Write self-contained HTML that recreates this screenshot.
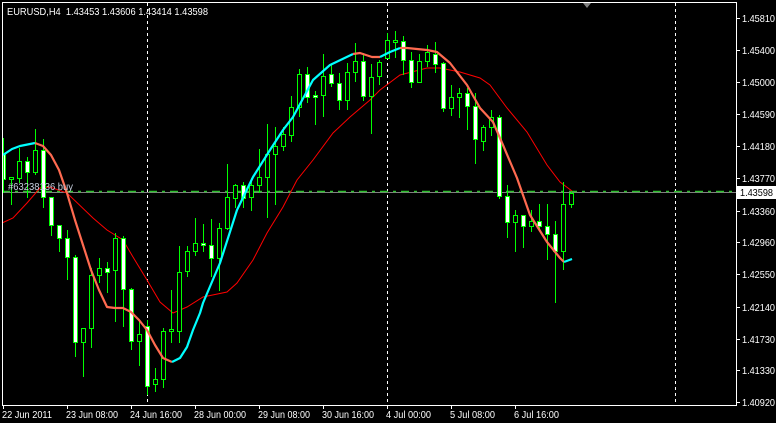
<!DOCTYPE html>
<html><head><meta charset="utf-8"><style>
html,body{margin:0;padding:0;background:#000;width:776px;height:423px;overflow:hidden}
svg{display:block}
text{font-family:"Liberation Sans",sans-serif;font-size:10.5px;fill:#fff}
</style></head><body>
<svg id="s" width="776" height="423" viewBox="0 0 776 423" xmlns="http://www.w3.org/2000/svg">
<rect width="776" height="423" fill="#000"/>
<g stroke="#fff" stroke-width="1" stroke-dasharray="3,3">
<line x1="147.5" y1="3" x2="147.5" y2="405"/>
<line x1="387.5" y1="3" x2="387.5" y2="405"/>
<line x1="675.5" y1="3" x2="675.5" y2="405"/>
</g>
<line x1="2" y1="192.5" x2="736" y2="192.5" stroke="#808080"/>
<line x1="2" y1="191.5" x2="736" y2="191.5" stroke="#2fbf2f" stroke-width="1.5" stroke-dasharray="8,5,3,5"/>
<polyline fill="none" stroke="#ff0000" stroke-width="1" points="2,223 13,218 27,203 40,188 50,187 67,193 93,218 107,230 123,240 133,257 147,280 160,302 173,313 180,310 187,307 203,297 227,292 237,283 253,260 267,233 283,207 297,180 313,160 333,133 350,117 370,100 380,90 400,75 427,68 440,68 460,72 480,78 490,85 507,108 527,132 547,165 560,182 572,191"/>
<g id="c"></g>
<g fill="none" stroke-width="2.2" stroke-linejoin="round">
<polyline stroke="#00ffff" points="3,155 12,149 20,146 35,143"/>
<polyline stroke="#ff6a50" points="35,143 43,146 51,155 59,170 67,193 75,220 83,245 91,270 99,290 107,307 115,308 123,308 131,312 139,320 147,330 155,345 163,358 172,362"/>
<polyline stroke="#00ffff" points="172,362 180,358 187,347 193,330 200,313 203,303 220,263 237,210 253,177 270,150 283,130 293,117 313,80 330,65 353,54"/>
<polyline stroke="#ff6a50" points="353,54 360,53 372,57 380,57"/>
<polyline stroke="#00ffff" points="380,57 390,52 400,48"/>
<polyline stroke="#ff6a50" points="400,48 407,48 427,50 437,52 450,63 467,85 480,108 493,122 503,145 517,178 530,215 547,242 560,258 564,262"/>
<polyline stroke="#00ffff" points="564,262 572,259"/>
</g>
<text x="8" y="190" textLength="65" lengthAdjust="spacingAndGlyphs" style="fill:#c8d0e0">#63238136 buy</text>
<rect x="2.5" y="2.5" width="734" height="403" fill="none" stroke="#fff"/>
<path d="M583 3 L591 3 L587 8 Z" fill="#808080"/>
<text x="7" y="15" textLength="201" lengthAdjust="spacingAndGlyphs" xml:space="preserve">EURUSD,H4  1.43453 1.43606 1.43414 1.43598</text>
<g id="ax"></g>
<rect x="737" y="186" width="39" height="13" fill="#fff"/>
<text x="740" y="196" textLength="33" lengthAdjust="spacingAndGlyphs" style="fill:#000">1.43598</text>
</svg>
<script>
var ns="http://www.w3.org/2000/svg";
function el(p,t,a,tx){var e=document.createElementNS(ns,t);for(var k in a)e.setAttribute(k,a[k]);if(tx)e.textContent=tx;p.appendChild(e);return e;}
var W=[[138,193],[178,205],[148,183],[157,198],[129,175],[139,208],[197,236],[225,252],[230,280],[255,357],[328,377],[268,348],[258,283],[262,293],[233,322],[236,327],[288,350],[320,366],[320,395],[368,392],[328,388],[290,343],[246,343],[246,277],[218,256],[224,252],[219,277],[223,291],[164,230],[184,208],[182,208],[178,211],[149,193],[124,218],[127,205],[127,151],[96,142],[69,117],[67,103],[91,125],[54,117],[65,87],[73,110],[63,110],[43,82],[53,101],[64,134],[60,85],[33,58],[31,58],[36,75],[52,88],[54,82],[45,67],[42,73],[62,112],[85,116],[88,118],[88,130],[93,164],[125,151],[110,136],[115,199],[185,238],[210,252],[215,248],[210,232],[204,230],[204,260],[221,303],[182,270],[192,208]];
var B="153,179,W 177,179,B 161,178,B 161,172,W 150,172,B 150,197,W 197,225,W 225,238,W 238,257,W 257,342,W 328,342,B 275,328,B 268,275,B 268,272,W 238,270,B 238,289,W 289,341,W 334,341,B 326,386,W 379,384,B 331,379,B 329,331,B 272,331,B 251,271,B 243,251,B 243,245,W 245,258,W 228,258,B 197,228,B 185,198,B 185,198,W 185,197,B 177,185,B 154,177,B 146,154,B 134,146,B 107,135,B 74,107,B 74,97,W 95,97,W 76,95,B 74,83,W 83,100,W 72,100,B 61,72,B 61,96,W 77,96,B 62,76,B 40,58,B 40,42,B 41,60,W 60,82,W 61,82,B 52,61,B 54,64,W 63,108,W 97,108,B 93,97,B 93,106,W 106,139,W 127,141,B 117,127,B 117,196,W 196,222,W 215,222,B 215,226,W 221,226,B 221,226,W 226,234,W 234,251,W 204,251,B 193,204,B".split(" ");
var g=document.getElementById("c");
for(var k=0;k<W.length;k++){var cx=3+8*k;
el(g,"rect",{x:cx,y:W[k][0],width:1,height:W[k][1]-W[k][0],fill:"#00ff00"});
var b=B[k].split(","),t=+b[0],bt=+b[1];
var x0=Math.max(cx-2,3);
el(g,"rect",{x:x0,y:t,width:cx+3-x0,height:bt-t+1,fill:"#00ff00"});
if(bt-t>=2)el(g,"rect",{x:x0+1,y:t+1,width:cx+2-x0-1,height:bt-t-1,fill:b[2]=="W"?"#fff":"#000"});}
var ax=document.getElementById("ax");
var P=[["1.45810",18],["1.45400",50],["1.45000",82],["1.44590",114],["1.44180",146],["1.43770",178],["1.43360",211],["1.42960",242],["1.42550",274],["1.42140",307],["1.41730",339],["1.41330",370],["1.40920",402]];
P.forEach(function(p){el(ax,"rect",{x:737,y:p[1],width:3,height:1,fill:"#fff"});el(ax,"text",{x:742,y:p[1]+4,textLength:33,lengthAdjust:"spacingAndGlyphs"},p[0]);});
var T=[["22 Jun 2011",3,50],["23 Jun 08:00",67,52],["24 Jun 16:00",131,52],["28 Jun 00:00",195,52],["29 Jun 08:00",259,52],["30 Jun 16:00",323,52],["4 Jul 00:00",387,45],["5 Jul 08:00",451,45],["6 Jul 16:00",515,45]];
T.forEach(function(p){el(ax,"rect",{x:p[1],y:406,width:1,height:3,fill:"#fff"});el(ax,"text",{x:p[1]-1,y:418,textLength:p[2],lengthAdjust:"spacingAndGlyphs"},p[0]);});
</script>
</body></html>
